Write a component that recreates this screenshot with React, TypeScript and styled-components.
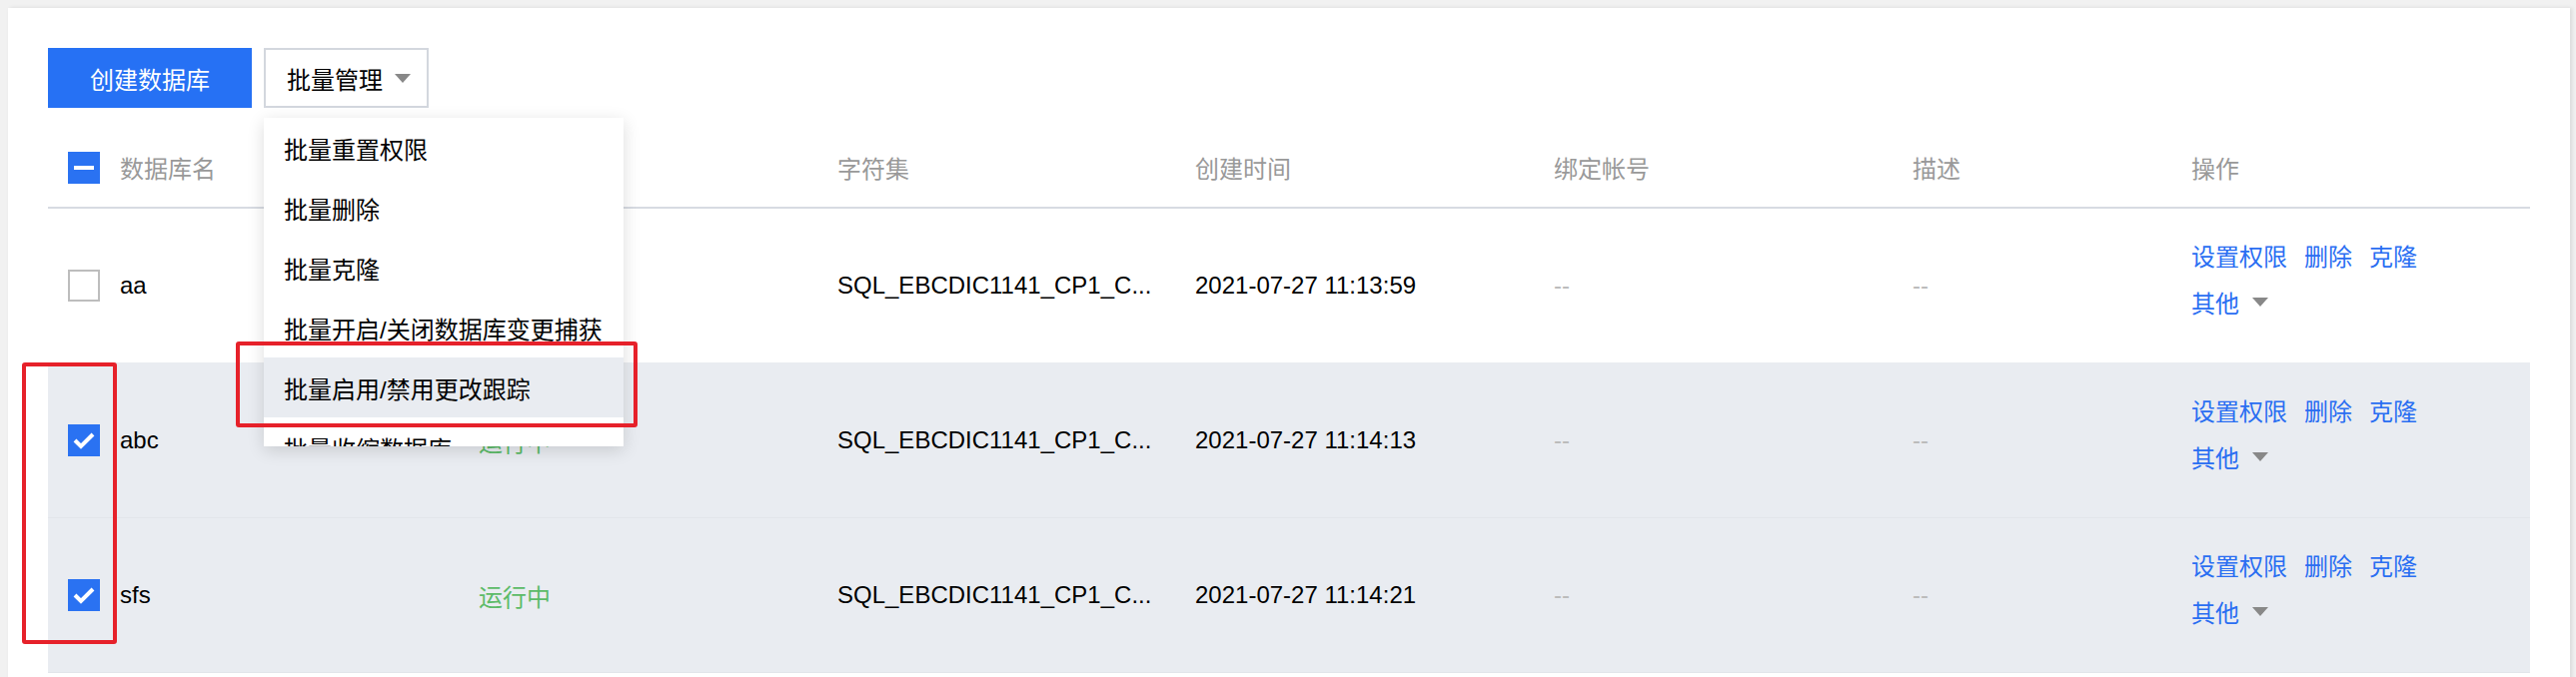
import React from "react";
import styled, { createGlobalStyle } from "styled-components";

const GlobalStyle = createGlobalStyle`
  html, body {
    margin: 0;
    padding: 0;
    background: #f1f1f1;
    font-family: "Liberation Sans", "Noto Sans CJK SC", sans-serif;
  }
  * {
    box-sizing: border-box;
  }
`;

type Row = {
  name: string;
  status: string;
  charset: string;
  createdAt: string;
  checked: boolean;
};

const rows: Row[] = [
  { name: "aa", status: "运行中", charset: "SQL_EBCDIC1141_CP1_C...", createdAt: "2021-07-27 11:13:59", checked: false },
  { name: "abc", status: "运行中", charset: "SQL_EBCDIC1141_CP1_C...", createdAt: "2021-07-27 11:14:13", checked: true },
  { name: "sfs", status: "运行中", charset: "SQL_EBCDIC1141_CP1_C...", createdAt: "2021-07-27 11:14:21", checked: true },
];

const menuItems = [
  "批量重置权限",
  "批量删除",
  "批量克隆",
  "批量开启/关闭数据库变更捕获",
  "批量启用/禁用更改跟踪",
  "批量收缩数据库",
];

const Caret = () => (
  <svg width="16" height="9" viewBox="0 0 16 9">
    <polygon points="0,0 16,0 8,9" fill="#888" />
  </svg>
);

const CheckBox = ({ state }: { state: "on" | "off" | "half" }) => (
  <Box $state={state}>
    {state === "on" && (
      <svg width="32" height="32" viewBox="0 0 32 32">
        <polyline points="7,16 13,22 25,10" fill="none" stroke="#fff" strokeWidth="4" />
      </svg>
    )}
    {state === "half" && <Dash />}
  </Box>
);

const App = () => {
  return (
    <Page>
      <GlobalStyle />
      <Panel>
        <Toolbar>
          <PrimaryButton>创建数据库</PrimaryButton>
          <DropWrap>
            <DropButton>
              批量管理
              <Caret />
            </DropButton>
            <Menu>
              {menuItems.map((item, i) => (
                <MenuItem key={item} $active={i === 4}>
                  {item}
                </MenuItem>
              ))}
            </Menu>
          </DropWrap>
        </Toolbar>

        <Table>
          <HeadRow>
            <Cell>
              <CheckBox state="half" />
            </Cell>
            <HeadCell>数据库名</HeadCell>
            <HeadCell>状态</HeadCell>
            <HeadCell>字符集</HeadCell>
            <HeadCell>创建时间</HeadCell>
            <HeadCell>绑定帐号</HeadCell>
            <HeadCell>描述</HeadCell>
            <HeadCell>操作</HeadCell>
          </HeadRow>
          {rows.map((r) => (
            <BodyRow key={r.name} $selected={r.checked}>
              <Cell>
                <CheckBox state={r.checked ? "on" : "off"} />
              </Cell>
              <Cell>{r.name}</Cell>
              <Cell>
                <Status>{r.status}</Status>
              </Cell>
              <Cell title="SQL_EBCDIC1141_CP1_CS_AS">{r.charset}</Cell>
              <Cell>{r.createdAt}</Cell>
              <Cell>
                <Empty>--</Empty>
              </Cell>
              <Cell>
                <Empty>--</Empty>
              </Cell>
              <OpsCell>
                <OpsLine>
                  <Link>设置权限</Link>
                  <Link>删除</Link>
                  <Link>克隆</Link>
                </OpsLine>
                <OpsLine>
                  <Link>其他</Link>
                  <Caret />
                </OpsLine>
              </OpsCell>
            </BodyRow>
          ))}
        </Table>
      </Panel>

      <Mark $left={236} $top={342} $w={402} $h={86} />
      <Mark $left={22} $top={363} $w={95} $h={282} />
    </Page>
  );
};

export default App;

const Page = styled.div`
  position: relative;
  padding: 8px 6px 0 8px;
  height: 678px;
  overflow: hidden;
`;

const Panel = styled.div`
  background: #fff;
  padding: 40px 40px 40px 40px;
  min-height: 700px;
  box-shadow: 2px 0 4px rgba(0, 0, 0, 0.1);
`;

const Toolbar = styled.div`
  display: flex;
  align-items: center;
  gap: 12px;
  height: 60px;
`;

const PrimaryButton = styled.button`
  width: 204px;
  height: 60px;
  border: none;
  border-radius: 0;
  background: #2671f4;
  color: #fff;
  font-family: inherit;
  font-size: 24px;
  cursor: pointer;
`;

const DropWrap = styled.div`
  position: relative;
`;

const DropButton = styled.button`
  display: flex;
  align-items: center;
  gap: 12px;
  height: 60px;
  padding: 0 16px 0 21px;
  border: 2px solid #d3d7de;
  background: #fff;
  color: #000;
  font-family: inherit;
  font-size: 24px;
  white-space: nowrap;
  cursor: pointer;
`;

const Menu = styled.div`
  position: absolute;
  left: 0;
  top: 70px;
  width: 360px;
  height: 329px;
  overflow: hidden;
  background: #fff;
  box-shadow: 0 4px 16px rgba(0, 0, 0, 0.14);
  z-index: 5;
`;

const MenuItem = styled.div<{ $active?: boolean }>`
  height: 60px;
  display: flex;
  align-items: center;
  padding: 0 20px;
  font-size: 24px;
  color: #000;
  white-space: nowrap;
  background: ${(p) => (p.$active ? "#e9ecf1" : "#fff")};
`;

const Table = styled.div`
  margin-top: 20px;
`;

const columns = "52px 359px 359px 358px 359px 359px 279px 359px";

const HeadRow = styled.div`
  display: grid;
  grid-template-columns: ${columns};
  height: 81px;
  border-bottom: 2px solid #d7dbe2;
  align-items: center;
`;

const BodyRow = styled.div<{ $selected?: boolean }>`
  display: grid;
  grid-template-columns: ${columns};
  height: 155px;
  align-items: center;
  border-bottom: 1px solid ${(p) => (p.$selected ? "#e2e5ea" : "#e9ecf1")};
  background: ${(p) => (p.$selected ? "#e9ecf1" : "#fff")};
`;

const Cell = styled.div`
  padding: 0 0 0 20px;
  font-size: 24px;
  color: #000;
  white-space: nowrap;
  overflow: hidden;
  text-overflow: ellipsis;
  display: flex;
  align-items: center;
`;

const HeadCell = styled(Cell)`
  color: #999;
`;

const Status = styled.span`
  color: #5cbb68;
`;

const Empty = styled.span`
  color: #bbb;
`;

const OpsCell = styled.div`
  padding: 0 0 14px 20px;
  display: flex;
  flex-direction: column;
`;

const OpsLine = styled.div`
  display: flex;
  align-items: center;
  gap: 17px;
  height: 47px;
  svg {
    margin-left: -4px;
  }
`;

const Link = styled.a`
  font-size: 24px;
  color: #2a6ef2;
  cursor: pointer;
`;

const Box = styled.span<{ $state: "on" | "off" | "half" }>`
  width: 32px;
  height: 32px;
  display: inline-flex;
  align-items: center;
  justify-content: center;
  background: ${(p) => (p.$state === "off" ? "#fff" : "#2a72f2")};
  border: ${(p) => (p.$state === "off" ? "2px solid #bdbdbd" : "none")};
`;

const Dash = styled.span`
  width: 20px;
  height: 4px;
  background: #fff;
`;

const Mark = styled.div<{ $left: number; $top: number; $w: number; $h: number }>`
  position: absolute;
  left: ${(p) => p.$left}px;
  top: ${(p) => p.$top}px;
  width: ${(p) => p.$w}px;
  height: ${(p) => p.$h}px;
  border: 4px solid #e6212a;
  border-radius: 3px;
  pointer-events: none;
  z-index: 10;
`;
